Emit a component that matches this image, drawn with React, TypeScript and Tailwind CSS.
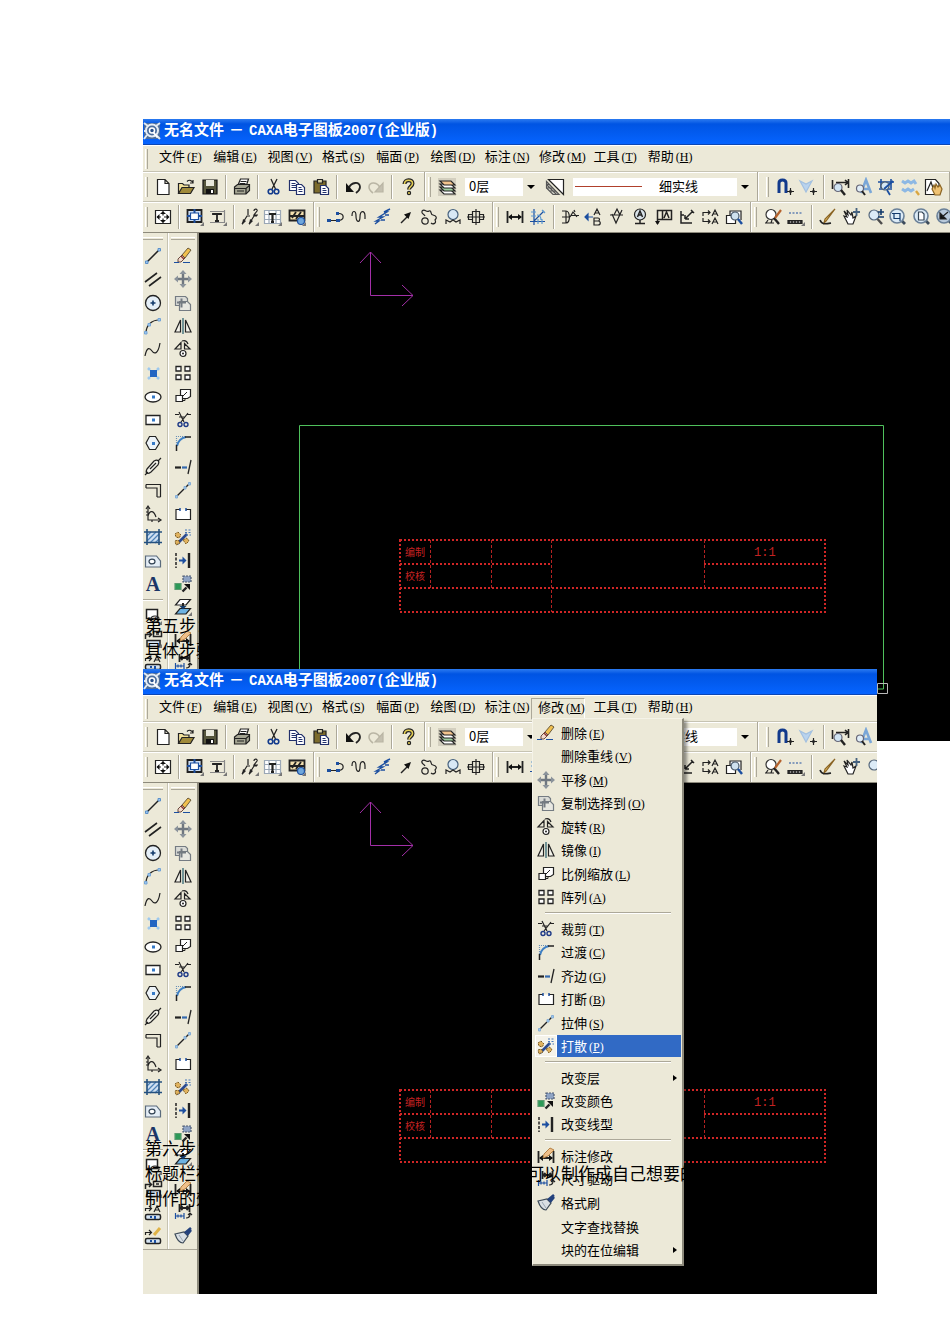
import type { ReactNode } from "react";

const BLUE = "#1c4fa0";
const SKY = "#9cc8ee";

const lens = (
  <>
    <circle cx="9" cy="8" r="5" fill="#dcebf7" stroke="#55677c" />
    <path d="M12.500 12l4.500 5" stroke="#4c4c4c" strokeWidth="2.400" />
  </>
);

const corner = <path d="M19 15v4h-4z" fill="#777" stroke="none" />;

const icons: Record<string, ReactNode> = {
  new: <path d="M4.500 2.500h7.500l4 4v11h-11.500zM12 2.500v4h4" fill="#fff" />,
  open: (
    <>
      <path d="M2.500 16V6.500h4l1.500 1.500h5v2.500" fill="#f4e29a" />
      <path d="M2.500 16.500l3.500-6h12l-3.500 6z" fill="#a08a3a" />
      <path d="M11 4.500c2-2 4-1.500 6 1M17 3v3h-3" />
    </>
  ),
  save: (
    <>
      <path d="M3 3h14v14H3z" fill="#55553c" stroke="#111" />
      <path d="M6 3h8v6H6z" fill="#e8e8dc" stroke="none" />
      <path d="M6 12h8v5H6z" fill="#111" stroke="none" />
      <path d="M11 13h2v3h-2z" fill="#fff" stroke="none" />
    </>
  ),
  print: (
    <>
      <path d="M6 8l2.500-6h8l-2 6" fill="#fff" />
      <path d="M2.500 10l3-2.500h12v6L14 17H2.500z" fill="#a5a593" />
      <path d="M2.500 11.500H14l3.500-3M5 14h7M14 11.500V17M8.500 4.500h6M7.500 6.500h6" />
    </>
  ),
  cut: (
    <>
      <path d="M7 2l4.500 10M13 2L8 12" strokeWidth="1.300" />
      <circle cx="6.500" cy="14.500" r="2.300" stroke="#123a8c" strokeWidth="1.600" />
      <circle cx="12.500" cy="14.500" r="2.300" stroke="#123a8c" strokeWidth="1.600" />
    </>
  ),
  copy: (
    <g fill="#fff" stroke="#22306b">
      <path d="M2.500 3.500h6l3 3v7h-9z" />
      <path d="M4.500 6.500h4M4.500 8.500h5M4.500 10.500h5" />
      <path d="M9.500 7.500h5l3 3v7h-8z" />
      <path d="M11.500 10.500h3M11.500 12.500h4M11.500 14.500h4" />
    </g>
  ),
  paste: (
    <>
      <path d="M3 4h12v12H3z" fill="#7c6b2c" />
      <path d="M6.500 2.500h5V6h-5z" fill="#d8d2a8" />
      <path d="M9.500 8.500h5l3 3v6h-8z" fill="#fff" stroke="#22306b" />
      <path d="M11.500 11.500h3M11.500 13.500h4M11.500 15.500h4" stroke="#22306b" />
    </>
  ),
  undo: (
    <>
      <path d="M6 11c2-6 11-7 11-1 0 3-2 4.500-4 6" strokeWidth="1.800" />
      <path d="M3 6v9h8z" fill="#111" stroke="none" />
    </>
  ),
  redo: (
    <g stroke="#b9b5a4">
      <path d="M14 11C12 5 3 4 3 10c0 3 2 4.500 4 6" strokeWidth="1.600" />
      <path d="M17 6v9H9z" fill="#c4c0b0" />
    </g>
  ),
  help: (
    <>
      <path d="M6.500 7c0-5 8-5 8-.5 0 3-3.500 3-3.500 6" stroke="#222" strokeWidth="4" />
      <path d="M6.500 7c0-5 8-5 8-.5 0 3-3.500 3-3.500 6" stroke="#e5cf55" strokeWidth="1.600" />
      <circle cx="11" cy="16" r="1.600" fill="#e5cf55" />
    </>
  ),
  layers: (
    <>
      <path d="M1 1h18v18H1z" fill="#d3cfbf" stroke="none" />
      <path d="M3 13h11l4 4H7z" fill="#fff" />
      <path d="M3 10h11l4 4H7z" fill="#9fcf9f" />
      <path d="M3 7h11l4 4H7z" fill="#fff" />
      <path d="M3 4h11l4 4H7z" fill="#f2c48d" />
    </>
  ),
  linetype: (
    <>
      <path d="M3.500 2.500h15v15z" fill="#fff" />
      <path d="M1.500 4.500L14 17.500H8L1.500 11z" fill="#d9d9cf" stroke="#555" />
      <path d="M1.500 7.500l10 10M1.500 7.500h3M1.500 11h6M5 14h6" stroke="#555" />
    </>
  ),
  magnet: (
    <>
      <path d="M4 16V6c0-4 7-4 7 0v10" stroke="#123a8c" strokeWidth="3" />
      <path d="M15.500 11v7M12 14.500h7" />
      <path d="M15.500 12.500l2 2-2 2-2-2z" fill="#222" stroke="none" />
    </>
  ),
  vsnap: (
    <>
      <path d="M2 4l6 11 6-11-6 3z" fill="#b9d3ee" stroke="#a2c0e0" />
      <path d="M15.500 11v7M12 14.500h7" />
      <path d="M15.500 12.500l2 2-2 2-2-2z" fill="#222" stroke="none" />
    </>
  ),
  dimfind: (
    <>
      <path d="M2.500 3v9M18.500 2v9M6 5.500h12M15 3l3 2.500L15 8" strokeWidth="1.600" />
      <circle cx="8" cy="10.500" r="4" fill="#cfe3f3" stroke="#667" />
      <path d="M11 13l4 5" strokeWidth="2.400" />
    </>
  ),
  afind: (
    <>
      <path d="M8 16L13 3l5 13M10 12h6" stroke="#7aa7d8" strokeWidth="2.600" />
      <circle cx="7" cy="11.500" r="3.500" fill="#e1eef8" stroke="#667" />
      <path d="M9 14l3 4" strokeWidth="2" />
    </>
  ),
  gridfind: (
    <>
      <path d="M2 5h16M5 2v9M15 2v9M3 12h13" stroke={BLUE} strokeWidth="1.600" />
      <circle cx="9" cy="9" r="4" fill="#d5e7f4" stroke="#456" />
      <path d="M17 4L8 12M11 13l3 5" stroke={BLUE} strokeWidth="1.800" />
    </>
  ),
  tiles: (
    <>
      <path d="M2 4l3 2 3-2 3 2 3-2 2 3M2 12l3 2 3-2 3 2 3-2" stroke="#8db8e4" strokeWidth="3" />
      <path d="M16 14l3 4" stroke="#d9a640" strokeWidth="2.400" />
    </>
  ),
  handdoc: (
    <>
      <path d="M2.500 2.500h10l3.500 4v11H2.500z" fill="#fff" />
      <path d="M4 14L8 5l3 9" />
      <path d="M9 12l2-4 1 3 1-4 2 3 2-2 2 4-2 6h-5z" fill="#efc273" stroke="#8a6424" />
    </>
  ),
  frame: (
    <>
      <path d="M2.500 3.500h15v13h-15z" fill="#fff" />
      <path d="M10 4.500v11M4 10h12" strokeDasharray="4 3" />
      <path d="M10 4l3 3H7zM10 16l3-3H7zM3.500 10l3-3v6zM16.500 10l-3-3v6z" fill="#111" stroke="none" />
    </>
  ),
  pageframe: (
    <>
      <path d="M2.500 3h14v12h-14z" fill="#cfe0f5" strokeWidth="1.800" />
      <path d="M5.500 6h8v6.500h-8z" fill="#fff" stroke={BLUE} />
      <path d="M9.500 2v4M9.500 12v4M2 9h4M13 9h4" stroke={BLUE} strokeWidth="2" />
      {corner}
    </>
  ),
  titlebox: (
    <>
      <path d="M2 4.500h14M2 15.500h14M16.500 3v13" stroke="#888" />
      <path d="M5 8V7h8v1M9 7v7M7 14h4" strokeWidth="1.800" />
      {corner}
    </>
  ),
  balloons: (
    <>
      <path d="M2 17l5-8h3M9 17l5-8h3M8 2v6M14 4c0-3 4-2 3 0l-3 4h4" />
      <path d="M3 12l-1 6 4-4zM10 12l-1 6 4-4z" fill="#222" stroke="none" />
      {corner}
    </>
  ),
  bomtable: (
    <>
      <path d="M1.500 3.500h16v13h-16zM1.500 7.500h16M1.500 12.500h16M6 3.500v13M13 3.500v13" stroke="#9aa7b6" fill="#fff" />
      <path d="M6 7h7M9.500 7v8M8 15h3" strokeWidth="2.200" />
      {corner}
    </>
  ),
  library: (
    <>
      <path d="M2.500 3.500h15v10h-15z" fill="#f2dfae" strokeWidth="1.800" />
      <path d="M5 11l4-6M9 12l5-7M3 9h14" strokeWidth="1.800" />
      <circle cx="14" cy="14" r="3.500" fill="#6fa7dc" stroke={BLUE} />
      {corner}
    </>
  ),
  polyline: (
    <>
      <path d="M3 13.500h10c6-1 5-7 0-7" />
      <path d="M1 12h4v3H1zM10 12h4v3h-4zM10 5h3v3h-3z" fill={BLUE} stroke="none" />
    </>
  ),
  wave: <path d="M3 9c0-6 4-6 4 0s4 8 4 1 5-7 5-1v3" />,
  zigzag: <path d="M2 17l4-3H3l7-4H6l8-5h-3l6-3M8 13h4M12 8h4" stroke={BLUE} strokeWidth="1.400" />,
  arrow: (
    <>
      <path d="M5 16l7-7" strokeWidth="1.500" />
      <path d="M15 5l-7 2.500L12.500 12z" fill="#111" stroke="none" />
    </>
  ),
  contour: (
    <>
      <path d="M3 4c3-3 4 2 7 0 3-1 1 4 4 4 4 1 4 3 2 5 2 3-2 5-4 3" />
      <path d="M3 4c-1 3 2 3 3 5" />
      <circle cx="6" cy="14" r="3.200" />
    </>
  ),
  stamp: (
    <>
      <circle cx="10" cy="7.500" r="5" fill="#d8e8f5" stroke="#46617e" />
      <path d="M3 17v-4l4 2 3-2 3 2 4-2v4" />
    </>
  ),
  shaft: <path d="M2.500 7.500h4v5h-4zM6.500 4.500h7v11h-7zM13.500 7.500h4v5h-4zM1 10h18M10 2v16" />,
  dimh: (
    <>
      <path d="M2.500 4v12M17.500 4v12M4 10h12" strokeWidth="1.800" />
      <path d="M3 10l4-3v6zM17 10l-4-3v6z" fill="#111" stroke="none" />
    </>
  ),
  coord: (
    <>
      <path d="M6 2v16M2 14.500h15M6 14L16 4" stroke={BLUE} />
      <path d="M3 5h5M3 9h5M10 12v5M14 12v5M14 3l3 3M9 8c3 0 4 2 4 5" stroke="#5c9ad2" />
    </>
  ),
  weld: <path d="M2 4h4c4 0 5 12 0 12H2M2 10h8M6 4v12M10 10l3-5 4 5M11 8.500h8M14 3l1 2" />,
  datum: (
    <>
      <path d="M11 8l3-6 3 6M12 6h4M11 11h4c2 0 2 3 0 3h-4zM11 14h4c3 0 3 4 0 4h-4z" />
      <path d="M2 10h8M2 10l3-3v6z" fill={BLUE} stroke={BLUE} />
    </>
  ),
  rough: <path d="M5 7l4 9 6-13M3 8h13M7 8l3-6 3 6" />,
  seal: (
    <>
      <circle cx="10" cy="7.500" r="5.500" fill="#d9e3ea" />
      <path d="M7.500 10L10 4l2.500 6M8.500 8h3M10 13v3M5 16.500h10" strokeWidth="1.500" />
    </>
  ),
  tolerance: (
    <>
      <path d="M3.500 3.500h14v9h-14zM8.500 3.500v9M10 11l2.500-6 2.500 6M3.500 12v5" strokeWidth="1.500" />
      <path d="M1 14h5l-2.500 4z" fill="#111" stroke="none" />
    </>
  ),
  leader: <path d="M4 4v12h11M4 8h3M8 12l8-8M8 12V8M8 12h4M14 3l3 3" strokeWidth="1.500" />,
  swapaa: <path d="M2 5.500h7M2 5v4M7 3.500l2 2-2 2M2 14.500h7M2 11v4M7 12.500l2 2-2 2M11 9l3-6 3 6M12 7h4M11 17l3-6 3 6M12 15h4" />,
  viewfind: (
    <>
      <path d="M2.500 8.500h9v8h-9zM6 8V4h11v9" fill="#fff" />
      <circle cx="11" cy="9" r="4" fill="#cfe1ef" stroke="#456" />
      <path d="M14 12l4 5" stroke={BLUE} strokeWidth="2.400" />
    </>
  ),
  redraw: (
    <>
      <circle cx="8" cy="7.500" r="5" fill="#fff" stroke="#333" />
      <path d="M11 11l5 6" strokeWidth="2.400" />
      <path d="M18 3l-6 8" stroke="#b5622d" strokeWidth="2.200" />
      <path d="M2 16h9M5 13l-2 3M9 13l-1 3" />
    </>
  ),
  ruler: (
    <>
      <path d="M3 6h13" stroke={BLUE} strokeDasharray="2 1.500" />
      <path d="M2 13.500h14v3H2z" fill="#333" />
      <path d="M4 15h11" stroke="#ddd" strokeDasharray="1 2" />
      {corner}
    </>
  ),
  pencil: (
    <>
      <path d="M17 2L8 14l-2 2 1-4z" fill="#f2cd70" stroke="#8a6424" />
      <path d="M2 13c2 5 6 4 11 3" strokeWidth="1.600" />
    </>
  ),
  pan: (
    <>
      <path d="M3 9l3 1-3-6 4 4-1-5 4 5 1-3 1 6 3-2-3 8H7z" fill="#fff" />
      <path d="M15.500 1v8M12 5h7" stroke="#46617e" strokeWidth="1.800" />
    </>
  ),
  zoompm: (
    <>
      {lens}
      <path d="M13 5h6M16 2v6M13 10h6" stroke="#123a6c" strokeWidth="1.600" />
    </>
  ),
  zoomwin: (
    <>
      <path d="M13 13l4 4" stroke="#3d4c5c" strokeWidth="2.800" />
      <circle cx="9" cy="9" r="7" fill="#dcebf7" stroke="#6a8098" strokeWidth="1.600" />
      <path d="M6 6.500h6v5H6zM4 6.500h2M12 11v3" stroke="#123a6c" />
    </>
  ),
  zoompage: (
    <>
      <path d="M13 13l4 4" stroke="#3d4c5c" strokeWidth="2.800" />
      <circle cx="9" cy="9" r="7" fill="#dcebf7" stroke="#6a8098" strokeWidth="1.600" />
      <path d="M6.500 5h3.500l2 2v6H6.500z" fill="#fff" stroke="#345" />
    </>
  ),
  zoomback: (
    <>
      <path d="M13 13l4 4" stroke="#3d4c5c" strokeWidth="2.800" />
      <circle cx="9" cy="9" r="7" fill="#b9cadb" stroke="#6a8098" strokeWidth="1.600" />
      <path d="M5 6v6h6zM7 10l6-5" fill="#111" />
    </>
  ),
  line: (
    <>
      <path d="M4 16L16 4" strokeWidth="1.500" />
      <path d="M2.500 15h2.500v2.500H2.500zM15 2.500h2.500V5H15z" fill={SKY} stroke="#5a8fca" strokeWidth="1" />
    </>
  ),
  parallel: <path d="M2 13L14 4M6 17l12-9" strokeWidth="1.600" />,
  circle: (
    <>
      <circle cx="10" cy="10" r="7.500" fill="#e5eff8" strokeWidth="1.300" />
      <path d="M10 7.500v5M7.500 10h5" stroke="#123a6c" strokeWidth="1.600" />
    </>
  ),
  arc: (
    <>
      <path d="M3 17C3 9 9 4 16 4" />
      <path d="M1.500 15.500H4V18H1.500zM15 2.500h2.500V5H15zM5 7.500h2.500V10H5z" fill={SKY} stroke="#74a5d8" strokeWidth="1" />
    </>
  ),
  spline: <path d="M2 16c2-10 5-8 7-5s6 4 8-8" />,
  point: (
    <>
      <path d="M7 7h7v7H7z" fill="#2265c2" stroke="none" />
      <path d="M5 5l2 2M16 5l-2 2M5 16l2-2M16 16l-2-2" stroke={SKY} strokeWidth="2.500" />
    </>
  ),
  ellipse: (
    <>
      <ellipse cx="10" cy="10" rx="8" ry="5" fill="#fff" strokeWidth="1.300" />
      <path d="M9 8.500h3v3H9z" fill="#3579c6" stroke="none" />
    </>
  ),
  rect: (
    <>
      <path d="M3 5.500h14v9H3z" fill="#fff" strokeWidth="1.300" />
      <path d="M9 8.500h3v3H9z" fill="#3579c6" stroke="none" />
    </>
  ),
  polygon: (
    <>
      <path d="M6.500 3.500h6l4 6.500-4 6.500h-6L3 10z" fill="#edf3f8" />
      <path d="M9 9h3v3H9z" fill="#3579c6" stroke="none" />
    </>
  ),
  slot: (
    <>
      <path d="M4 12l7-8c4-2 6 0 4 4l-7 7c-4 3-6 1-4-3z" fill="#f4f3ea" />
      <path d="M7 12l6-6M2 18l3-3M15 4l3-3" />
    </>
  ),
  offset: <path d="M3 4.500h14.500V17M3 8h11v9M3 8V4.500M14 17h3.500" />,
  formula: (
    <>
      <path d="M5 3v13h12M5 12c2-7 6-5 8 1" />
      <path d="M3 5l2-3 2 3M15 14l3 2-3 2M3 8h2M3 11h2M9 16v2" />
    </>
  ),
  hatch: (
    <>
      <path d="M4 5h12v11H4z" fill="#cfe0f2" stroke="none" />
      <path d="M4 9l4-4M4 14l9-9M7 16l9-9M12 16l4-4" stroke="#4f83b8" />
      <path d="M4 2v16M16 2v16M1 5h18M1 15.500h18" stroke="#24507f" strokeWidth="1.600" />
    </>
  ),
  hole: (
    <>
      <path d="M2.500 5h11l4 5v6h-15z" fill="#e4edf5" stroke="#5a6b7c" />
      <ellipse cx="9" cy="10.500" rx="3" ry="2.400" fill="#fff" stroke="#345" />
    </>
  ),
  block: (
    <>
      <path d="M3.500 3.500h11v9h-11z" fill="#fff" strokeWidth="1.500" />
      <ellipse cx="12" cy="13" rx="4" ry="3" />
      {corner}
    </>
  ),
  blockin: (
    <>
      <path d="M2.500 10V5.500h5M6 3l2.500 2.500L6 8M10.500 2.500h8v5h-8zM13 5h3" strokeWidth="1.500" />
      <path d="M4 11.500h13v6H4z" fill="#d4e3f2" strokeWidth="1.500" />
      {corner}
    </>
  ),
  blocktext: (
    <>
      <path d="M2.500 8V5.500h6M6 3l2.500 2.500L6 8M11 9l3-6 3 6M12 7h4" />
      <rect x="2.500" y="11.500" width="15" height="5" rx="1.500" fill="#d4e3f2" strokeWidth="1.500" />
      <path d="M7 14h2M12 13v3" stroke={BLUE} strokeWidth="2" />
    </>
  ),
  blockedit: (
    <>
      <path d="M2.500 9V6.500h6M6 4l2.500 2.500L6 9" />
      <path d="M17 2l-6 7" stroke="#e0b347" strokeWidth="3" />
      <rect x="2.500" y="12.500" width="15" height="5" rx="1.500" fill="#d4e3f2" strokeWidth="1.500" />
      <path d="M7 15h2M12 14v3" stroke={BLUE} strokeWidth="2" />
    </>
  ),
  eraser: (
    <>
      <path d="M9 9l6-7 3 2-6 8z" fill="#f1c04e" stroke="#6a5a3a" strokeWidth="1" />
      <path d="M5 13l4-4 3 3-4 4H5z" fill="#f3d9cc" stroke="#6a4a3e" strokeWidth="1" />
      <path d="M8 10l3 3" stroke="#8a3a2e" strokeWidth="1.500" />
      <path d="M1 16.500h5M10 16.500h7" stroke={BLUE} />
    </>
  ),
  move: (
    <g stroke="#6f7780">
      <path d="M10 4v12M4 10h12" strokeWidth="2.400" />
      <path d="M10 1l3.500 4h-7zM10 19l3.500-4h-7zM1 10l4-3.500v7zM19 10l-4-3.500v7z" fill="#8b939b" stroke="none" />
    </g>
  ),
  copyto: (
    <g stroke="#747b82">
      <path d="M2.500 3.500h10l2 2v7h-12z" fill="#dadbd6" />
      <path d="M6.500 8.500h8l3 3v6h-11z" fill="#e8e8e2" />
      <path d="M4 9.500h9M8.500 5.500v9" strokeWidth="2" />
    </g>
  ),
  mirror: (
    <>
      <path d="M7.500 4v12H2zM12.500 4v12H18z" fill="#f4f3ea" />
      <path d="M10 2v16" stroke="#537d86" strokeWidth="1.600" />
    </>
  ),
  rotate: (
    <>
      <path d="M8 3.500V10H2zM11.500 4.500L17 10h-5.500z" />
      <path d="M9 2c3-1 5 0 6 3" />
      <circle cx="10" cy="14.500" r="3" fill="#fff" />
      <circle cx="10" cy="14.500" r="1" fill="#222" stroke="none" />
    </>
  ),
  array: <path d="M3 3.500h5V8H3zM12 3.500h5V8h-5zM3 12h5v4.500H3zM12 12h5v4.500h-5z" fill="#fff" strokeWidth="1.300" />,
  scale: (
    <>
      <path d="M7.500 3.500h10v7l-3 2h-7z" fill="#fff" />
      <path d="M3 9.500h6.500v6H3z" fill="#fff" />
      <path d="M10 10l4-4M12 12v2.500h-2" strokeWidth="1" />
    </>
  ),
  trim: (
    <>
      <path d="M2 4.500h4M14 4.500h4M6 2l5 10M15 3L8 12M6 7h6" />
      <circle cx="7" cy="14.500" r="2" stroke="#1e3a86" strokeWidth="1.400" />
      <circle cx="13" cy="14.500" r="2" stroke="#1e3a86" strokeWidth="1.400" />
    </>
  ),
  fillet: (
    <>
      <path d="M4 13c1-5 4-8 9-9" stroke="#3d7fc4" strokeWidth="2" />
      <path d="M3.500 12V3.500H12" stroke="#6b8fb5" strokeDasharray="1 1" />
      <path d="M3.500 12v6M12 4h6" strokeWidth="1.500" />
    </>
  ),
  extend: (
    <>
      <path d="M2 10.500h6" strokeWidth="2.200" />
      <path d="M9 10.500h5" stroke="#3569ae" strokeWidth="2.200" />
      <path d="M18 3l-3 14" strokeWidth="1.300" />
    </>
  ),
  breakline: (
    <>
      <path d="M7 5.500H3v10h14.500v-10H13" fill="#fff" />
      <path d="M7 4v3M13 4v3" stroke={BLUE} strokeWidth="1.500" />
    </>
  ),
  stretch: (
    <>
      <path d="M4 16l7-7M13 7l3-3" strokeWidth="1.400" />
      <path d="M2.500 15.500h2V18h-2zM11 6.500h2V9h-2zM15.500 2.500h2V5h-2z" fill={SKY} stroke="#86aed6" strokeWidth="1" />
    </>
  ),
  explode: (
    <>
      <path d="M4 17L14 7" stroke="#2b4a8f" strokeWidth="2.600" />
      <path d="M2 7l3-2 3 3-2 3-3-1zM2 14l3-1 2 3-4 2zM10 13l4-2 2 3-3 3z" fill="#e0b25d" stroke="#7a5a22" strokeWidth="1" strokeDasharray="2 1" />
      <path d="M12 3h7M12 5.500h7M13 8h5" stroke="#4778b8" strokeDasharray="2 1.500" />
    </>
  ),
  changeline: (
    <>
      <path d="M3 3v15" strokeDasharray="3 1.500" strokeWidth="1.500" />
      <path d="M16 3v15" strokeWidth="2.400" />
      <path d="M6 10.500h6" stroke={BLUE} strokeWidth="2" />
      <path d="M9.500 6.500l4 4-4 4z" fill={BLUE} stroke="none" />
    </>
  ),
  changecolor: (
    <>
      <path d="M10 2h8v6h-8z" fill="#8ea3c4" stroke="#4d5a71" strokeDasharray="2 1" />
      <path d="M2 9.500h6v6H2z" fill="#2c9a57" stroke="#5a9a70" />
      <path d="M9.500 17.500l4-4" strokeWidth="2.400" />
      <path d="M11 10h6v6z" fill="#111" stroke="none" />
    </>
  ),
  changelayer: (
    <>
      <path d="M7 2.500h10.500L13 8H2.500z" fill="#fff" />
      <path d="M7 11.500h10.500L13 17H2.500z" fill="#6db2e2" />
      <path d="M10 6v4" strokeWidth="2" />
      <path d="M6.500 9h7L10 12.500z" fill="#123a6c" stroke="none" />
      {corner}
    </>
  ),
  dimedit: (
    <>
      <path d="M2.500 5v12M17.500 5v12M4 12h12" strokeWidth="1.800" />
      <path d="M3 12l4-3v6zM17 12l-4-3v6z" fill="#111" stroke="none" />
      <path d="M8 8l6-6 4 2-6 6-5 2z" fill="#efc08a" stroke="#b58144" strokeWidth="1" />
    </>
  ),
  dimdrive: (
    <>
      <path d="M6.500 2v8M16.500 2v8M8 6h7M9.500 4L7.500 6l2 2M13.500 4l2 2-2 2" strokeWidth="1.800" />
      <path d="M2.500 11v6M11 11v6M3 14h8M5 12.500v3M8 12.500v3" stroke={BLUE} />
      <path d="M13 16c3 0 4-1 4-4M15 13l2-2 2 2" />
    </>
  ),
  brush: (
    <>
      <path d="M2 8l9-2 4 4-5 7c-3 0-6-3-8-9z" fill="#d9dfe4" stroke="#3c4a58" />
      <path d="M12 7l6-5M14 9l4-5" stroke="#23417c" strokeWidth="2.600" />
      <path d="M6 9l4 6" stroke="#9aa7b4" strokeWidth="1" />
    </>
  ),
};

function Icon({ name }: { name: string }) {
  if (name === "text") {
    return (
      <span className="w-5 text-center font-['Liberation_Serif',serif] text-xl leading-5 font-bold text-[#1b3566]">A</span>
    );
  }
  return (
    <svg viewBox="0 0 20 20" className="h-5 w-5 shrink-0" fill="none" stroke="#222" strokeWidth="1.200" aria-hidden="true">
      {icons[name]}
    </svg>
  );
}

function IconButton({ name }: { name: string }) {
  return (
    <button type="button" aria-label={name} className="flex items-center justify-center">
      <Icon name={name} />
    </button>
  );
}

function Group({ width, names }: { width: string; names: string[] }) {
  return (
    <div className={`grid h-full shrink-0 auto-cols-fr grid-flow-col ${width}`}>
      {names.map((name) => (
        <IconButton key={name} name={name} />
      ))}
    </div>
  );
}

function Sep() {
  return (
    <div className="flex w-2 shrink-0 justify-center">
      <div className="h-6 w-0.5 border-l border-[#aca899] bg-white" />
    </div>
  );
}

// End of one toolbar followed by the grip of the next
function Break({ width = "w-[15px]" }: { width?: string }) {
  return (
    <div className={`flex h-full shrink-0 items-center justify-between pr-1 pl-1 ${width}`}>
      <div className="h-full w-0.5 border-l border-[#aca899] bg-white" />
      <div className="h-5 w-[3px] border-r border-l border-r-[#aca899] border-l-white" />
    </div>
  );
}

function Grip() {
  return (
    <div className="flex w-2 shrink-0 items-center pl-0.5">
      <div className="h-5 w-[3px] border-r border-l border-r-[#aca899] border-l-white" />
    </div>
  );
}

function Arrow() {
  return (
    <span className="pointer-events-none absolute inset-y-0 right-0 flex w-4 items-center justify-center bg-[#ece9d8]">
      <svg viewBox="0 0 8 4" className="h-1 w-2" aria-hidden="true">
        <path d="M0 0h8L4 4z" />
      </svg>
    </span>
  );
}

const menus = [
  ["文件", "F"],
  ["编辑", "E"],
  ["视图", "V"],
  ["格式", "S"],
  ["幅面", "P"],
  ["绘图", "D"],
  ["标注", "N"],
  ["修改", "M"],
  ["工具", "T"],
  ["帮助", "H"],
];

function Label({ text, hotkey }: { text: string; hotkey?: string }) {
  return (
    <span className="whitespace-nowrap">
      {text}
      {hotkey && (
        <span className="ml-0.5 font-['Liberation_Serif',serif] text-xs">
          (<u>{hotkey}</u>)
        </span>
      )}
    </span>
  );
}

function TitleBar() {
  return (
    <header className="flex h-[26px] items-center gap-[3px] border-b border-[#0b46b4] bg-linear-to-b from-[#2a7af0] via-[#0054e3] via-20% to-[#0664ff] pb-0.5 text-[15px] font-bold text-white">
      <svg viewBox="0 0 18 18" className="h-[18px] w-[18px] shrink-0" fill="none" aria-hidden="true">
        <path d="M1 1h16v16H1z" fill="#4a6c9c" />
        <path d="M1 1l4 3M17 1l-4 3M1 17l3-4M17 17l-4-4M1 9h2" stroke="#dfe8f2" strokeWidth="2" />
        <circle cx="9" cy="8.500" r="6" stroke="#e7edf4" strokeWidth="2" />
        <circle cx="9" cy="8.500" r="2.500" fill="#27508c" stroke="#fff" strokeWidth="1.500" />
        <path d="M10.500 10.500l4 5" stroke="#fff" strokeWidth="2" />
      </svg>
      <h1 className="whitespace-nowrap">
        无名文件<span className="mx-[5px]">－</span>
        <span className="font-['Liberation_Mono',monospace] text-sm">CAXA</span>电子图板
        <span className="font-['Liberation_Mono',monospace] text-sm">2007(</span>企业版
        <span className="font-['Liberation_Mono',monospace] text-sm">)</span>
      </h1>
    </header>
  );
}

function MenuBar({ active }: { active?: string }) {
  return (
    <nav className="flex h-[26px] items-center border-t border-white">
      <Grip />
      <div className="grid w-[543px] shrink-0 grid-cols-10">
        {menus.map(([text, hotkey]) => (
          <button
            key={text}
            type="button"
            className={
              text === active
                ? "h-[22px] border border-[#aca899] border-r-white border-b-white pb-1 pl-1.5 text-left leading-4"
                : "h-[22px] pb-1 pl-2 text-left leading-4"
            }
          >
            <Label text={text} hotkey={hotkey} />
          </button>
        ))}
      </div>
    </nav>
  );
}

function Toolbars() {
  return (
    <>
      <div className="flex h-[30px] items-center border-t border-[#c6c3b2] shadow-[inset_0_1px_0_#fff]">
        <Grip />
        <Group width="w-[71px]" names={["new", "open", "save"]} />
        <Sep />
        <Group width="w-6" names={["print"]} />
        <Sep />
        <Group width="w-[71px]" names={["cut", "copy", "paste"]} />
        <Sep />
        <Group width="w-[47px]" names={["undo", "redo"]} />
        <Sep />
        <Group width="w-6" names={["help"]} />
        <Break />
        <Group width="w-6" names={["layers"]} />
        <div className="relative ml-1.5 w-[74px] shrink-0">
          <select aria-label="层" className="block h-[18px] w-full appearance-none bg-white pb-0.5 pl-1 leading-4">
            <option>0层</option>
          </select>
          <Arrow />
        </div>
        <div className="ml-1 flex shrink-0">
          <Group width="w-6" names={["linetype"]} />
        </div>
        <div className="relative ml-1.5 w-[180px] shrink-0">
          <select aria-label="线型" className="block h-[18px] w-full appearance-none bg-white pb-0.5 pl-[86px] leading-4">
            <option>细实线</option>
          </select>
          <span className="pointer-events-none absolute top-2 left-0.5 h-px w-[67px] bg-[#b0402c]" />
          <Arrow />
        </div>
        <Break width="w-5" />
        <Group width="w-[47px]" names={["magnet", "vsnap"]} />
        <Sep />
        <Group width="w-[117px]" names={["dimfind", "afind", "gridfind", "tiles", "handdoc"]} />
        <Break />
      </div>
      <div className="flex h-8 items-center border-t border-b border-t-[#c6c3b2] border-b-[#8d8a7c] shadow-[inset_0_1px_0_#fff]">
        <Grip />
        <Group width="w-6" names={["frame"]} />
        <Sep />
        <Group width="w-[47px]" names={["pageframe", "titlebox"]} />
        <Sep />
        <Group width="w-[71px]" names={["balloons", "bomtable", "library"]} />
        <Break />
        <Group width="w-[164px]" names={["polyline", "wave", "zigzag", "arrow", "contour", "stamp", "shaft"]} />
        <Break />
        <Group width="w-[47px]" names={["dimh", "coord"]} />
        <Sep />
        <Group
          width="w-[188px]"
          names={["weld", "datum", "rough", "seal", "tolerance", "leader", "swapaa", "viewfind"]}
        />
        <Break />
        <Group width="w-[47px]" names={["redraw", "ruler"]} />
        <Sep />
        <Group width="w-[141px]" names={["pencil", "pan", "zoompm", "zoomwin", "zoompage", "zoomback"]} />
      </div>
    </>
  );
}

function ToolColumn({ names, height }: { names: string[]; height: string }) {
  return (
    <div className={`grid auto-rows-fr ${height}`}>
      {names.map((name) => (
        <IconButton key={name} name={name} />
      ))}
    </div>
  );
}

const drawTools = [
  "line", "parallel", "circle", "arc", "spline", "point", "ellipse", "rect",
  "polygon", "slot", "offset", "formula", "hatch", "hole", "text",
];

const editTools = [
  "eraser", "move", "copyto", "mirror", "rotate", "array", "scale", "trim",
  "fillet", "extend", "stretch", "breakline", "explode", "changeline", "changecolor", "changelayer",
];

function SideBars() {
  return (
    <aside className="w-14 shrink-0 border-r-2 border-[#8d8a7c]">
      <div className="flex h-[467px] border-b border-[#aca899]">
        <div className="w-[25px] border-r border-[#c6c3b2] pr-1">
          <div className="mt-1 mb-1 h-[3px] border-t border-b border-t-white border-b-[#aca899]" />
          <ToolColumn names={drawTools} height="h-[352px]" />
          <div className="my-[3px] h-0.5 border-t border-[#aca899] bg-white" />
          <ToolColumn names={["block", "blockin", "blocktext", "blockedit"]} height="h-[94px]" />
        </div>
        <div className="flex-1 border-l border-white pr-0.5 pl-0.5">
          <div className="mt-1 mb-1 h-[3px] border-t border-b border-t-white border-b-[#aca899]" />
          <ToolColumn names={editTools} height="h-[375px]" />
          <div className="my-[3px] h-0.5" />
          <ToolColumn names={["dimedit", "dimdrive", "brush"]} height="h-[71px]" />
        </div>
      </div>
    </aside>
  );
}

function Drawing({ height, framed }: { height: string; framed?: boolean }) {
  return (
    <svg className={`min-w-0 flex-1 bg-black ${height}`} fill="none" aria-label="绘图区">
      <g stroke="#a32fa8">
        <path d="M171.500 19v43.500H214M161 30l10.500-11L182 30M203 52l11 10.500L203 73" />
      </g>
      {framed && (
        <>
          <path d="M100.500 458V192.500h584V456H679" stroke="#4fc05c" />
          <path d="M678.500 450.500h10v10h-10z" stroke="#b9b9b9" />
        </>
      )}
      <g stroke="#d02626" strokeWidth="2" strokeDasharray="2 2">
        <path d="M201 307h425v72H201zM201 355h425M201 331h151M505 331h121" />
      </g>
      <g stroke="#b42222" strokeDasharray="3 2">
        <path d="M231.500 307v48M292.500 307v48M352.500 307v72M505.500 307v48" />
      </g>
      <g fill="#c32222" className="font-['Noto_Sans_CJK_SC',sans-serif] text-[10px]">
        <text x="206" y="323">编制</text>
        <text x="206" y="347">校核</text>
        <text x="555" y="323" className="font-['Liberation_Mono',monospace] text-xs">1:1</text>
      </g>
    </svg>
  );
}

type Item = { icon?: string; text: string; hotkey?: string; sub?: boolean; active?: boolean };

const modifyMenu: { height: string; items: Item[] }[] = [
  {
    height: "h-[188px]",
    items: [
      { icon: "eraser", text: "删除", hotkey: "E" },
      { text: "删除重线", hotkey: "V" },
      { icon: "move", text: "平移", hotkey: "M" },
      { icon: "copyto", text: "复制选择到", hotkey: "O" },
      { icon: "rotate", text: "旋转", hotkey: "R" },
      { icon: "mirror", text: "镜像", hotkey: "I" },
      { icon: "scale", text: "比例缩放", hotkey: "L" },
      { icon: "array", text: "阵列", hotkey: "A" },
    ],
  },
  {
    height: "h-[141px]",
    items: [
      { icon: "trim", text: "裁剪", hotkey: "T" },
      { icon: "fillet", text: "过渡", hotkey: "C" },
      { icon: "extend", text: "齐边", hotkey: "G" },
      { icon: "breakline", text: "打断", hotkey: "B" },
      { icon: "stretch", text: "拉伸", hotkey: "S" },
      { icon: "explode", text: "打散", hotkey: "P", active: true },
    ],
  },
  {
    height: "h-[70px]",
    items: [
      { text: "改变层", sub: true },
      { icon: "changecolor", text: "改变颜色" },
      { icon: "changeline", text: "改变线型" },
    ],
  },
  {
    height: "h-[118px]",
    items: [
      { icon: "dimedit", text: "标注修改" },
      { icon: "dimdrive", text: "尺寸驱动" },
      { icon: "brush", text: "格式刷" },
      { text: "文字查找替换" },
      { text: "块的在位编辑", sub: true },
    ],
  },
];

function ModifyMenu() {
  return (
    <div className="absolute top-[49px] left-[389px] w-[152px] border border-r-2 border-b-2 border-[#f5f3e8] border-r-[#8d8a7c] border-b-[#8d8a7c] bg-[#ece9d8] py-0.5 pr-px pl-0.5 text-[13px] leading-[18px] shadow-[3px_3px_3px_rgba(0,0,0,0.4)]">
      {modifyMenu.map((group, i) => (
        <div key={group.height}>
          {i > 0 && (
            <div className="flex h-2 items-center pr-2.5 pl-2.5">
              <div className="h-0.5 w-full border-t border-[#aca899] bg-white" />
            </div>
          )}
          <div className={`grid auto-rows-fr ${group.height}`}>
            {group.items.map((item) => (
              <button key={item.text} type="button" className="flex items-center text-left">
                <span
                  className={
                    item.active
                      ? "flex h-[22px] w-[22px] items-center justify-center border border-white bg-[#f5f3ea]"
                      : "flex h-[22px] w-[22px] items-center justify-center"
                  }
                >
                  {item.icon && <Icon name={item.icon} />}
                </span>
                <span
                  className={
                    item.active
                      ? "flex h-[22px] flex-1 items-center bg-[#316ac5] pl-1 text-white"
                      : "flex h-[22px] flex-1 items-center justify-between pr-1 pl-1"
                  }
                >
                  <Label text={item.text} hotkey={item.hotkey} />
                  {item.sub && (
                    <svg viewBox="0 0 4 6" className="h-1.5 w-1" aria-hidden="true">
                      <path d="M0 0l4 3-4 3z" />
                    </svg>
                  )}
                </span>
              </button>
            ))}
          </div>
        </div>
      ))}
    </div>
  );
}

function CadWindow({ height, framed, active }: { height: string; framed?: boolean; active?: string }) {
  return (
    <div className="overflow-hidden bg-[#ece9d8] text-[13px] leading-[18px] text-black">
      <TitleBar />
      <MenuBar active={active} />
      <Toolbars />
      <div className={`flex overflow-hidden ${height}`}>
        <SideBars />
        <Drawing height={height} framed={framed} />
      </div>
    </div>
  );
}

export default function App() {
  return (
    <main className="overflow-x-hidden bg-white pt-[119px] pb-[49px] pl-[143px] font-['Noto_Sans_CJK_SC',sans-serif] text-black">
      <section className="relative">
        <CadWindow height="h-[508px]" framed />
        <div className="absolute top-[493px] left-0.5 text-[17px] leading-[25px] whitespace-nowrap">
          <p>第五步：</p>
          <p>具体步骤</p>
        </div>
      </section>
      <section className="relative -mt-[72px] mr-[73px]">
        <CadWindow height="h-[511px]" active="修改" />
        <ModifyMenu />
        <div className="absolute top-[466px] left-0.5 text-[17px] leading-[25px] whitespace-nowrap">
          <p>第六步：</p>
          <p className="flex">
            <span className="w-[382px]">标题栏被</span>
            <span>可以制作成自己想要的</span>
          </p>
          <p>制作的效</p>
        </div>
      </section>
    </main>
  );
}
